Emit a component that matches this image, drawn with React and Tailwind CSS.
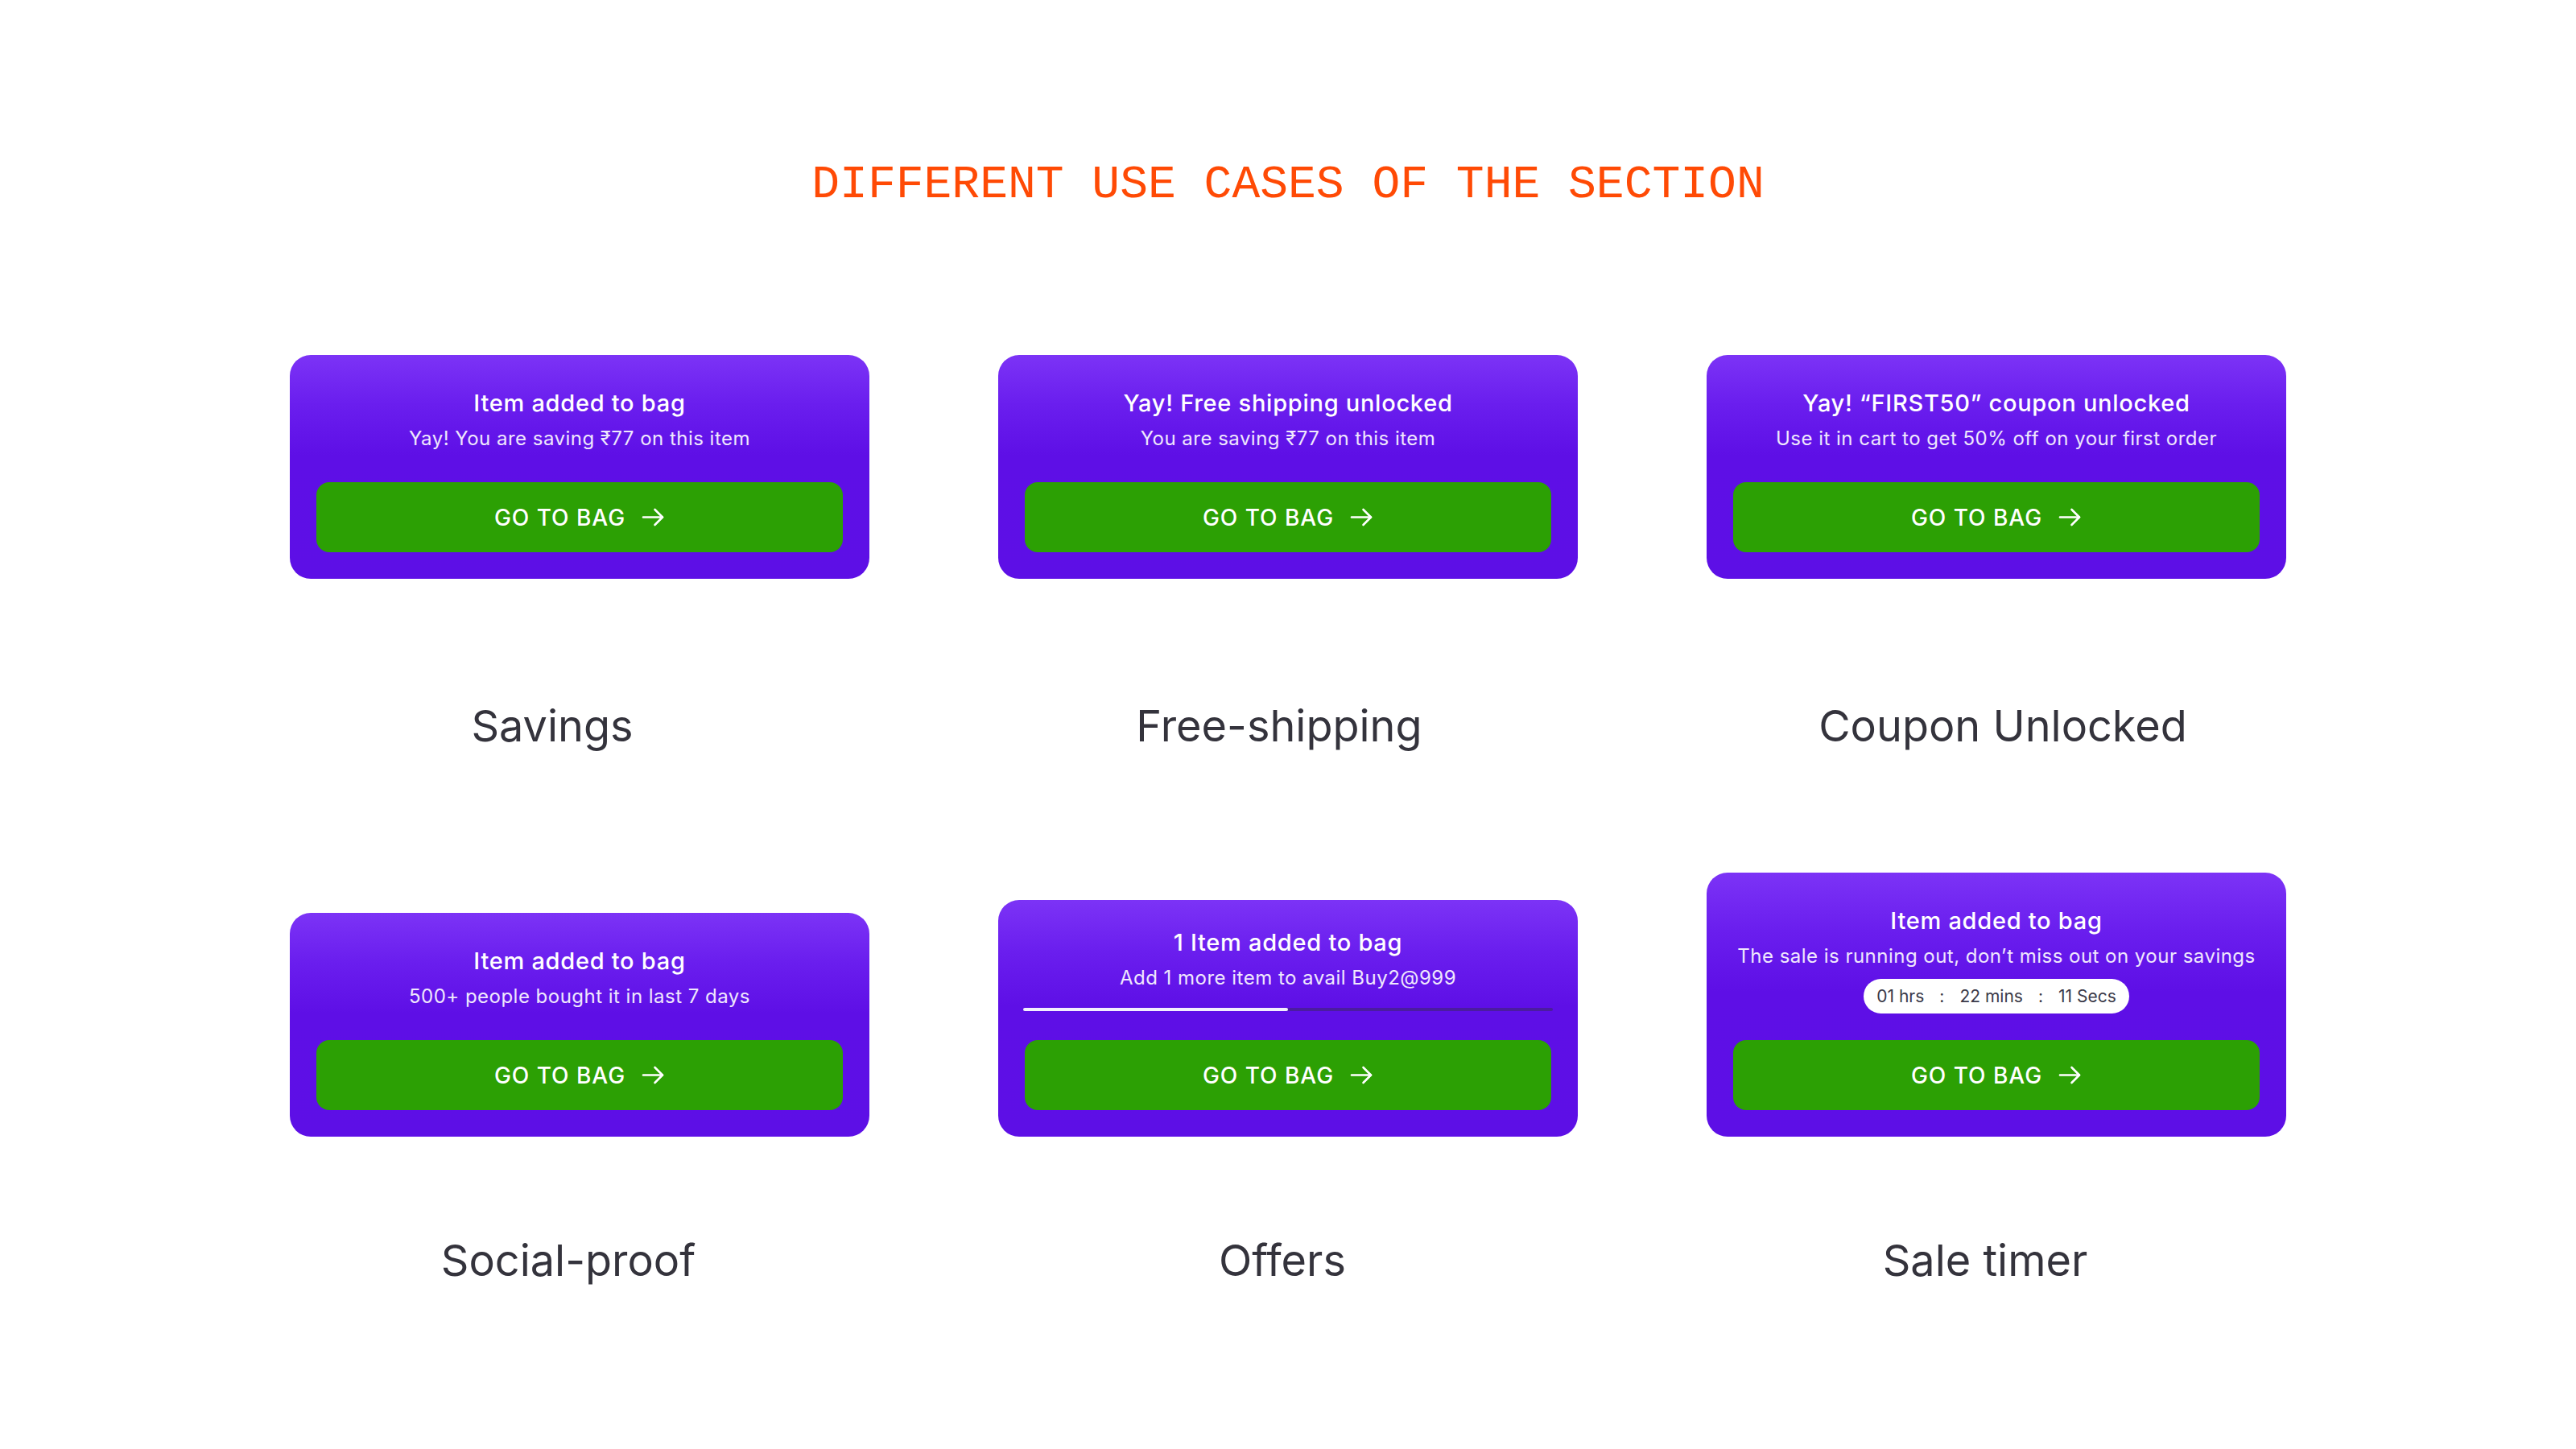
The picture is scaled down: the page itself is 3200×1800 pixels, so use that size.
import React from "react";

const cardFont = { fontFamily: "Inter, 'Noto Sans', sans-serif" };

function Arrow() {
  return (
    <svg width="29" height="23" viewBox="0 0 29 23" fill="none" stroke="currentColor" strokeWidth="2.6" strokeLinecap="round" strokeLinejoin="round">
      <path d="M2 11.5h24" />
      <path d="M16.5 2l9.5 9.5-9.5 9.5" />
    </svg>
  );
}

function BagButton({ className = "" }) {
  return (
    <button className={`h-[87px] w-full rounded-[16px] bg-[#2ca004] text-white flex items-center justify-center gap-[20px] ${className}`}>
      <span className="text-[28px] font-medium tracking-[0.035em] leading-none">GO TO BAG</span>
      <Arrow />
    </button>
  );
}

function Card({ title, subtitle, variant = "basic" }) {
  return (
    <div
      className="w-[720px] rounded-[26px] px-[33px] pb-[33px] flex flex-col items-center text-white bg-[linear-gradient(180deg,#7c33f6_0%,#6a1eee_22%,#5e0fe6_45%,#5d0fe6_100%)]"
      style={cardFont}
    >
      <div className={`${variant === "progress" ? "pt-[35px]" : "pt-[42px]"} text-[29px] leading-[36px] font-medium tracking-[0.025em] text-center whitespace-nowrap`}>
        {title}
      </div>
      <div className="mt-[11px] text-[24px] leading-[30px] tracking-[0.02em] text-white/90 text-center whitespace-nowrap">{subtitle}</div>

      {variant === "progress" && (
        <div className="mt-[22px] -mx-[2px] self-stretch h-[4px] rounded-full bg-[#4b1c9f] flex">
          <div className="w-1/2 h-full rounded-full bg-[#f3eefe]" />
        </div>
      )}

      {variant === "timer" && (
        <div className="mt-[13px] h-[43px] w-[330px] rounded-full bg-white flex items-center justify-center gap-[19px] text-[21px] text-[#3b3a49]">
          <span>01 hrs</span>
          <span>:</span>
          <span>22 mins</span>
          <span>:</span>
          <span>11 Secs</span>
        </div>
      )}

      <BagButton
        className={variant === "basic" ? "mt-[39px]" : variant === "progress" ? "mt-[36px]" : "mt-[33px]"}
      />
    </div>
  );
}

function Caption({ children, className = "" }) {
  return (
    <div
      className={`text-center text-[54px] leading-[64px] text-[#34333c] ${className}`}
      style={{ fontFamily: "Inter, 'Liberation Sans', sans-serif" }}
    >
      {children}
    </div>
  );
}

export default function App() {
  const top = [
    { title: "Item added to bag", subtitle: "Yay! You are saving ₹77 on this item", caption: "Savings", shift: "pr-[68px]" },
    { title: "Yay! Free shipping unlocked", subtitle: "You are saving ₹77 on this item", caption: "Free-shipping", shift: "pr-[22px]" },
    { title: "Yay! “FIRST50” coupon unlocked", subtitle: "Use it in cart to get 50% off on your first order", caption: "Coupon Unlocked", shift: "pl-[16px]" },
  ];
  const bottom = [
    { title: "Item added to bag", subtitle: "500+ people bought it in last 7 days", caption: "Social-proof", shift: "pr-[28px]", variant: "basic" },
    { title: "1 Item added to bag", subtitle: "Add 1 more item to avail Buy2@999", caption: "Offers", shift: "pr-[14px]", variant: "progress" },
    { title: "Item added to bag", subtitle: "The sale is running out, don’t miss out on your savings", caption: "Sale timer", shift: "pr-[28px]", variant: "timer" },
  ];

  return (
    <div className="w-full min-h-screen bg-white flex flex-col items-center">
      <h1
        className="pt-[195px] text-[58px] leading-[70px] text-[#ff4a05]"
        style={{ fontFamily: "'Liberation Mono', 'DejaVu Sans Mono', monospace" }}
      >
        DIFFERENT USE CASES OF THE SECTION
      </h1>

      <div className="mt-[176px] grid grid-cols-3 gap-x-[160px]">
        {top.map((c) => (
          <div key={c.caption} className="flex flex-col">
            <Card title={c.title} subtitle={c.subtitle} />
            <Caption className={`mt-[151px] ${c.shift}`}>{c.caption}</Caption>
          </div>
        ))}
      </div>

      <div className="mt-[150px] grid grid-cols-3 gap-x-[160px] items-end">
        {bottom.map((c) => (
          <div key={c.caption} className="flex flex-col">
            <Card title={c.title} subtitle={c.subtitle} variant={c.variant} />
            <Caption className={`mt-[122px] ${c.shift}`}>{c.caption}</Caption>
          </div>
        ))}
      </div>
    </div>
  );
}
